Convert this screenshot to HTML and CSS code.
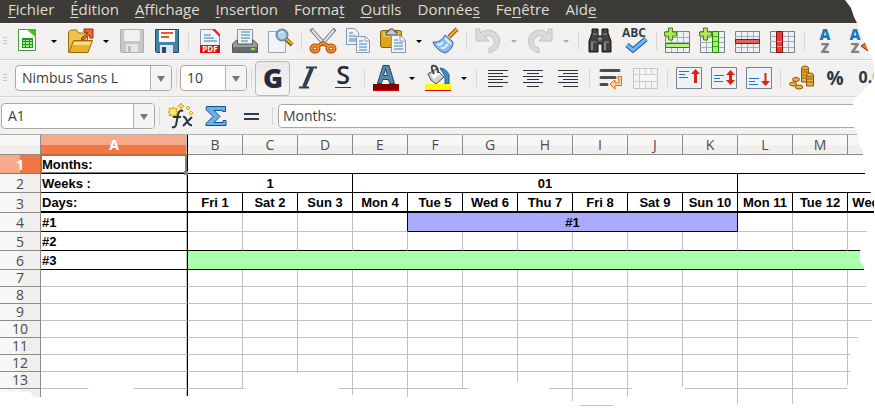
FILE: index.html
```
<!DOCTYPE html>
<html lang="fr">
<head>
<meta charset="utf-8">
<title>Planning</title>
<link rel="stylesheet" href="styles.css">
</head>
<body>
<div class="app">
<nav class="menu">
<a href="#"><u>F</u>ichier</a><a href="#"><u>É</u>dition</a><a href="#"><u>A</u>ffichage</a><a href="#"><u>I</u>nsertion</a><a href="#">Forma<u>t</u></a><a href="#"><u>O</u>utils</a><a href="#">Donnée<u>s</u></a><a href="#">Fe<u>n</u>être</a><a href="#">Aid<u>e</u></a>
</nav>

<div class="bar">
<span class="grip"></span>
<button class="btn" aria-label="Nouveau"><svg viewBox="0 0 26 26"><path d="M3.500 1.500h11l6 6v15h-17z" fill="#fdfefd" stroke="#3f9e3a"/><path d="M11 1h10v9z" fill="#3fc41f"/><path d="M12 2l8 7" stroke="#c9f2bb"/><path d="M7 10h11v10H7z" fill="#1f9a1b"/><path d="M8 12h2v1H8zM11 12h3v1h-3zM15 12h2v1h-2zM8 14h2v2H8zM11 14h3v2h-3zM15 14h2v2h-2zM8 17h2v2H8zM11 17h3v2h-3zM15 17h2v2h-2z" fill="#a8e59b"/></svg></button>
<button class="drop" aria-label="Options de nouveau"></button>
<button class="btn" aria-label="Ouvrir"><svg viewBox="0 0 26 26"><path d="M1.500 24V4l2-2h6l2 3h9v19z" fill="#f3c04a" stroke="#a16a09"/><path d="M2 24.500L6.500 12.500h19L21 24.500z" fill="#eab12c" stroke="#a16a09"/><path d="M7 14h17l-1 3H6z" fill="#ffdf86"/><path d="M14.500 12v-2L21 5l-4-1V1h9v9h-3l-1-3-6 5z" fill="#ec6a33" stroke="#8e2f0a"/></svg></button>
<button class="drop" aria-label="Options d'ouverture"></button>
<button class="btn" aria-label="Enregistrer" disabled><svg viewBox="0 0 26 26"><path d="M1.500 1.500h23v23h-22l-1-1z" fill="#c6c6c6" stroke="#b0b0b0"/><path d="M5 2h16v11H5z" fill="#f1f1f1"/><path d="M7 16h12v8H7z" fill="#e6e6e6"/><path d="M9 18h3v6H9z" fill="#bcbcbc"/></svg></button>
<button class="btn" aria-label="Enregistrer sous"><svg viewBox="0 0 26 26"><path d="M1.500 1.500h23v23h-22l-1-1z" fill="#4683a8" stroke="#1f4866"/><path d="M5 2h16v12H5z" fill="#fbfcfd"/><path d="M7 5h12M7 9h8" stroke="#f2562a" stroke-width="2"/><path d="M6 17h13v8H6z" fill="#dfe7ed"/><path d="M8 19h4v6H8z" fill="#244b66"/></svg></button>
<span class="sep"></span>
<button class="btn" aria-label="Exporter au format PDF"><svg viewBox="0 0 26 26"><path d="M3.500 1.500h12l7 7v16h-19z" fill="#eef3f8" stroke="#8795a5"/><path d="M15 1h3l5 5v3z" fill="#e2231f"/><path d="M7 7h7M7 10h10M7 13h13" stroke="#3979a9"/><path d="M3 17h20v8H3z" fill="#e00d0d"/><text x="13" y="24" font-size="8" class="svg-bold" fill="#fff">PDF</text></svg></button>
<button class="btn" aria-label="Imprimer"><svg viewBox="0 0 26 26"><path d="M5.500 15V1.500h15V15" fill="#eef4fa" stroke="#8494a5"/><path d="M9 4h9M9 7h9M9 10h9M9 13h7" stroke="#3680b5"/><path d="M.5 24.500V16l4-4h1v4h15v-4h1l4 4v8.500z" fill="#9b9c9c" stroke="#55585a"/><path d="M1 19h24v5H1z" fill="#686b6d"/><path d="M19 21h4" stroke="#7be33d" stroke-width="2"/></svg></button>
<button class="btn" aria-label="Aperçu"><svg viewBox="0 0 26 26"><path d="M1.500 3.500h17v21h-17z" fill="#f0f4f9" stroke="#9aa6b4"/><circle cx="15" cy="7" r="5.500" fill="#a8d5f4" stroke="#6b8bab" stroke-width="2"/><path d="M12 6q1-3 4-2" fill="none" stroke="#fff"/><path d="M19 11l6 6" stroke="#83530b" stroke-width="4"/><path d="M19 11l6 5" stroke="#f1b31f" stroke-width="2"/></svg></button>
<span class="sep"></span>
<button class="btn" aria-label="Couper"><svg viewBox="0 0 26 26"><path d="M1 1l14 16M25 1L11 17" stroke="#707880" stroke-width="4"/><path d="M2 2l12 14M24 2L12 16" stroke="#e3e6e8" stroke-width="2"/><g fill="none" stroke="#a84d05" stroke-width="4"><ellipse cx="5" cy="20.500" rx="3.500" ry="3"/><ellipse cx="21" cy="20.500" rx="3.500" ry="3"/><path d="M8 18l5-3 5 3"/></g><g fill="none" stroke="#f58f2b" stroke-width="2"><ellipse cx="5" cy="20.500" rx="3.500" ry="3"/><ellipse cx="21" cy="20.500" rx="3.500" ry="3"/><path d="M8 18l5-3 5 3"/></g></svg></button>
<button class="btn" aria-label="Copier"><svg viewBox="0 0 26 26"><path d="M1.500.5h8l4 4v12h-12z" fill="#edf3f9" stroke="#8998aa"/><path d="M4 5h4M4 8h7M4 11h7M4 13h7" stroke="#3d82b8"/><path d="M11.500 8.500h9l4 4v12h-13z" fill="#edf3f9" stroke="#8998aa"/><path d="M20 9v4h4" fill="#fff" stroke="#8998aa"/><path d="M14 13h4M14 16h8M14 19h8M14 22h8" stroke="#3d82b8"/></svg></button>
<button class="btn" aria-label="Coller"><svg viewBox="0 0 26 26"><rect x=".5" y="2.500" width="21" height="17" rx="2" fill="#dba51c" stroke="#85600c"/><path d="M3 4h16v5H3z" fill="#efc44c"/><path d="M6 5.500V4h2l2-3h3l2 3h2v3H6z" fill="#c5c8ca" stroke="#47494b"/><path d="M11.500 7.500h9l5 5v12h-14z" fill="#edf3f9" stroke="#8998aa"/><path d="M20 8v5h5" fill="#fff" stroke="#8998aa"/><path d="M14 12h4M14 15h9M14 18h9M14 21h9" stroke="#3d82b8"/></svg></button>
<button class="drop" aria-label="Options de collage"></button>
<button class="btn" aria-label="Cloner le formatage"><svg viewBox="0 0 26 26"><path d="M17 9l8-8" stroke="#88550a" stroke-width="4"/><path d="M17 9l8-8" stroke="#f3b530" stroke-width="2"/><path d="M13 7l8 7c0 5-3 9-8 11C9 24 3 20 1 14c5 1 9-2 12-7z" fill="#86bdf0" stroke="#2c5fa8"/><path d="M5 16l3 1 3-3M9 20l3 0 4-4M13 10l6 6" fill="none" stroke="#e0f1ff" stroke-width="2"/></svg></button>
<span class="sep"></span>
<button class="btn" aria-label="Annuler" disabled><svg viewBox="0 0 26 26"><path d="M1 1h4v4Q14-1 21 5c7 7 3 18-7 20v-5c7-2 6-8 3-11q-3-3-7 0l4 4H1z" fill="#dadada" stroke="#c2c2c2"/></svg></button>
<button class="drop dim" aria-label="Historique d'annulation" disabled></button>
<button class="btn" aria-label="Rétablir" disabled><svg viewBox="0 0 26 26"><path d="M25 1h-4v4Q12-1 5 5c-7 7-3 18 7 20v-5c-7-2-6-8-3-11q3-3 7 0l-4 4h13z" fill="#dadada" stroke="#c2c2c2"/></svg></button>
<button class="drop dim" aria-label="Historique de rétablissement" disabled></button>
<span class="sep"></span>
<button class="btn" aria-label="Rechercher"><svg viewBox="0 0 26 26"><path d="M5 1h6v7h4V1h6v4l3 8v11h-9v-8h-4v8H2V13l3-8z" fill="#414141" stroke="#161616"/><path d="M6 6h4M16 6h4M4 14h5M17 14h5" stroke="#9b9b9b"/><path d="M5 15v7M18 15v7" stroke="#858585" stroke-width="2"/><circle cx="13" cy="11" r="2" fill="#8a8a8a"/></svg></button>
<button class="btn" aria-label="Orthographe"><svg viewBox="0 0 26 26"><text x="12" y="9" font-size="12" class="svg-bold" fill="#303f4c">ABC</text><path d="M5 17l6 5L24 11" fill="none" stroke="#1c4f9c" stroke-width="5"/><path d="M5 17l6 5L24 11" fill="none" stroke="#67b9f7" stroke-width="3"/></svg></button>
<span class="sep"></span>
<button class="btn" aria-label="Insérer une ligne"><svg viewBox="0 0 26 26"><path d="M.5 3.500h24v21H.5z" fill="#eef0f3" stroke="#777f87"/><path d="M6.500 4v20M12.500 4v20M18.500 4v20M0 9.500h24M0 14.500h24M0 19.500h24" stroke="#a7adb4"/><path d="M.5 15.500h24v4H.5z" fill="#b4f27a" stroke="#1d8c0d"/><path d="M3.500 0h4v4h4v4h-4v4h-4V8h-4V4h4z" fill="#b6e35b" stroke="#3c8710"/></svg></button>
<button class="btn" aria-label="Insérer une colonne"><svg viewBox="0 0 26 26"><path d="M.5 3.500h24v21H.5z" fill="#eef0f3" stroke="#777f87"/><path d="M6.500 4v20M12.500 4v20M18.500 4v20M0 9.500h24M0 14.500h24M0 19.500h24" stroke="#a7adb4"/><path d="M12.500 3.500h6v21h-6z" fill="#a9f06c" stroke="#1d8c0d"/><path d="M13 8.500h5M13 13.500h5M13 18.500h5" stroke="#3caa20"/><path d="M3.500 0h4v4h4v4h-4v4h-4V8h-4V4h4z" fill="#b6e35b" stroke="#3c8710"/></svg></button>
<button class="btn" aria-label="Supprimer la ligne"><svg viewBox="0 0 26 26"><path d="M.5 3.500h24v21H.5z" fill="#eef0f3" stroke="#777f87"/><path d="M6.500 4v20M12.500 4v20M18.500 4v20M0 8.500h24M0 13.500h24M0 19.500h24" stroke="#a7adb4"/><path d="M.5 11.500h24v4H.5z" fill="#e85b5b" stroke="#a30c0c"/></svg></button>
<button class="btn" aria-label="Supprimer la colonne"><svg viewBox="0 0 26 26"><path d="M.5 3.500h24v21H.5z" fill="#eef0f3" stroke="#777f87"/><path d="M6.500 4v20M12.500 4v20M18.500 4v20M0 8.500h24M0 13.500h24M0 19.500h24" stroke="#a7adb4"/><path d="M6.500 3.500h6v21h-6z" fill="#e83a3a" stroke="#8f0c0c"/><path d="M7 13.500h5M7 18.500h5" stroke="#f9a0a0"/></svg></button>
<span class="sep"></span>
<button class="btn" aria-label="Tri croissant"><svg viewBox="0 0 26 26"><text x="12" y="12" font-size="15" class="svg-heavy" fill="#1b78c4">A</text><text x="12" y="25" font-size="14" class="svg-heavy" fill="#7b8085">Z</text></svg></button>
<button class="btn" aria-label="Tri décroissant"><svg viewBox="0 0 26 26"><text x="7" y="12" font-size="15" class="svg-heavy" fill="#1b78c4">A</text><text x="7" y="25" font-size="14" class="svg-heavy" fill="#7b8085">Z</text><path d="M13 18l6-4v3h6v3h-5v3z" fill="#ef6a25" stroke="#8e230a"/></svg></button>
</div>

<div class="bar">
<span class="grip wide"></span>
<label class="combo font"><select aria-label="Police"><option>Nimbus Sans L</option></select></label>
<span class="sep"></span>
<label class="combo size"><select aria-label="Taille"><option>10</option></select></label>
<span class="sep"></span>
<button class="btn on" aria-label="Gras"><svg viewBox="0 0 26 26"><text x="13" y="23" font-size="27" class="svg-heavy" fill="#232c38">G</text></svg></button>
<button class="btn" aria-label="Italique"><svg viewBox="0 0 26 26"><path d="M11 2.500h11M4 22.500h10" stroke="#2d3f50" stroke-width="2"/><path d="M17 3L9 22" stroke="#2d3f50" stroke-width="4"/></svg></button>
<button class="btn" aria-label="Souligné"><svg viewBox="0 0 26 26"><text x="13" y="19" font-size="25" class="svg-text" fill="#232c38">S</text><path d="M5 22.500h16" stroke="#2d3f50"/></svg></button>
<span class="sep"></span>
<button class="btn" aria-label="Couleur de police"><svg viewBox="0 0 26 26"><path d="M4.500 18.500L10 .5h6l5.500 18h-5l-1-4h-6l-1 4zM10.500 10.500h4L12.500 4z" fill="#5588ac" fill-rule="evenodd" stroke="#24475f"/><path d="M0 19h26v6H0z" fill="#800000"/><path d="M0 25h26v1H0z" fill="#e00000"/></svg></button>
<button class="drop" aria-label="Choisir la couleur de police"></button>
<button class="btn" aria-label="Surlignage"><svg viewBox="0 0 26 26"><path d="M15 3q7 1 9 7v9h-4v-8z" fill="#3c8bc4" stroke="#195d90"/><path d="M3 9l8-5 8 8-8 7q-6-3-8-10z" fill="#d0d3d5" stroke="#42484c"/><path d="M6 10l6-4 3 3-6 5z" fill="#fff"/><path d="M9 9Q4-1 10 1q3 1 3 7" fill="none" stroke="#42484c" stroke-width="2"/><path d="M0 19h26v6H0z" fill="#ff0"/><path d="M0 25h26v1H0z" fill="#e00000"/></svg></button>
<button class="drop" aria-label="Choisir la couleur de surlignage"></button>
<span class="sep"></span>
<button class="btn" aria-label="Aligner à gauche"><svg viewBox="0 0 26 26"><path d="M3 5.500h20M3 8.500h15M3 11.500h20M3 14.500h15M3 17.500h20M3 21.500h15" stroke="#27333f"/></svg></button>
<button class="btn" aria-label="Centrer"><svg viewBox="0 0 26 26"><path d="M3 5.500h20M7 8.500h12M3 11.500h20M7 14.500h12M3 17.500h20M7 21.500h12" stroke="#27333f"/></svg></button>
<button class="btn" aria-label="Aligner à droite"><svg viewBox="0 0 26 26"><path d="M3 5.500h20M8 8.500h15M3 11.500h20M8 14.500h15M3 17.500h20M8 21.500h15" stroke="#27333f"/></svg></button>
<span class="sep"></span>
<button class="btn" aria-label="Renvoi à la ligne"><svg viewBox="0 0 26 26"><path d="M3 5.500h18M3 12.500h14M3 19.500h6" stroke="#464c50" stroke-width="3" stroke-linecap="round"/><path d="M20 11.500h3.500v9H17v3.500L12 19l5-4v3h4v-4h-1z" fill="#fcd9a8" stroke="#d96c0c"/></svg></button>
<button class="btn" aria-label="Fusionner les cellules" disabled><svg viewBox="0 0 26 26"><path d="M.5 3.500h24v20H.5z" fill="#f4f4f4" stroke="#c4c4c4"/><path d="M6.500 4v6M12.500 4v6M18.500 4v6M6.500 10v7M6.500 17v6M12.500 17v6M18.500 17v6M0 9.500h24M0 16.500h24" stroke="#cdcdcd"/></svg></button>
<span class="sep"></span>
<button class="btn" aria-label="Aligner en haut"><svg viewBox="0 0 26 26"><path d="M.5 2.500h25v21H.5z" fill="#edf2f7" stroke="#76818d"/><path d="M3 6.500h10M3 9.500h6M3 12.500h9" stroke="#2378bd"/><path d="M19.500 18V8" stroke="#d8240e" stroke-width="3"/><path d="M15 9l4.500-5L24 9z" fill="#d8240e"/></svg></button>
<button class="btn" aria-label="Centrer verticalement"><svg viewBox="0 0 26 26"><path d="M.5 2.500h25v21H.5z" fill="#edf2f7" stroke="#76818d"/><path d="M3 10.500h10M3 13.500h6M3 16.500h9" stroke="#2378bd"/><path d="M19.500 17V8" stroke="#d8240e" stroke-width="3"/><path d="M15 10l4.500-5 4.500 5zM15 15l4.500 5 4.500-5z" fill="#d8240e"/></svg></button>
<button class="btn" aria-label="Aligner en bas"><svg viewBox="0 0 26 26"><path d="M.5 2.500h25v21H.5z" fill="#edf2f7" stroke="#76818d"/><path d="M3 13.500h10M3 16.500h6M3 19.500h9" stroke="#2378bd"/><path d="M19.500 18V8" stroke="#d8240e" stroke-width="2"/><path d="M15 16l4.500 5 4.500-5z" fill="#d8240e"/></svg></button>
<span class="sep"></span>
<button class="btn" aria-label="Format monétaire"><svg viewBox="0 0 26 26"><g fill="#edb239" stroke="#8d560a"><path d="M12.500 3v14h7V3z"/><path d="M17.500 10v11h7V10z"/><ellipse cx="16" cy="3" rx="3.500" ry="2"/><ellipse cx="21" cy="10" rx="3.500" ry="2"/><ellipse cx="7" cy="14.500" rx="3.500" ry="2"/><ellipse cx="4" cy="19" rx="3.500" ry="2"/><ellipse cx="10" cy="22" rx="4" ry="2"/></g><path d="M13 7h6M13 10h4M13 13h4M18 14h6M18 17h6" stroke="#8d560a"/></svg></button>
<button class="btn" aria-label="Format pourcentage"><svg viewBox="0 0 26 26"><text x="11" y="20" font-size="19" class="svg-bold" fill="#263847">%</text></svg></button>
<button class="btn" aria-label="Format standard"><svg viewBox="0 0 26 26"><text x="11" y="18" font-size="16" class="svg-bold" fill="#263847">0.0</text></svg></button>
</div>

<div class="bar formula">
<label class="combo name"><select aria-label="Zone de nom"><option>A1</option></select></label>
<span class="sep"></span>
<button class="btn" aria-label="Assistant fonctions"><svg viewBox="0 0 26 26"><path d="M5 4l1 2 3-1-1 3 2 1-2 1 1 3-3-1-1 2-1-2-3 1 1-3-2-1 2-1-1-3 3 1zM13 0l1 2 2 1-2 1-1 2-1-2-2-1 2-1zM20 3l2 2-2 2-2-2zM23 8l2 2-2 2-2-2z" fill="#ffe87a" stroke="#e6a400"/><path d="M15 8q-4-2-5 4L8 22q-1 3-4 2M5 14h8" fill="none" stroke="#243746" stroke-width="2"/><path d="M15 14q2-1 4 4t5 4M24 14l-9 9" fill="none" stroke="#243746" stroke-width="2"/></svg></button>
<button class="btn" aria-label="Somme"><svg viewBox="0 0 26 26"><path d="M3.500 3.500h19v5h-3v-1H11l6 6-6 6h9v-2h3v5h-20v-2l7-7-7-7z" fill="#63b2ec" stroke="#17508c"/></svg></button>
<button class="btn" aria-label="Formule"><svg viewBox="0 0 26 26"><path d="M6 11h15M6 16h15" stroke="#2a3e50" stroke-width="2"/></svg></button>
<span class="sep"></span>
<input class="entry" type="text" aria-label="Ligne de saisie" value="Months:">
</div>

<div class="sheet">
<table>
<colgroup><col class="c-num"><col class="c-a"><col span="13" class="c-day"></colgroup>
<thead><tr><th></th><th class="sel">A</th><th>B</th><th>C</th><th>D</th><th>E</th><th>F</th><th>G</th><th>H</th><th>I</th><th>J</th><th>K</th><th>L</th><th>M</th><th></th></tr></thead>
<tbody>
<tr class="tall line"><th class="sel">1</th><td class="cursor">Months:</td><td colspan="13"></td></tr>
<tr class="tall line mid"><th>2</th><td>Weeks :</td><td colspan="3">1</td><td colspan="7">01</td><td colspan="3"></td></tr>
<tr class="tall line mid thick"><th>3</th><td>Days:</td><td>Fri 1</td><td>Sat 2</td><td>Sun 3</td><td>Mon 4</td><td>Tue 5</td><td>Wed 6</td><td>Thu 7</td><td>Fri 8</td><td>Sat 9</td><td>Sun 10</td><td>Mon 11</td><td>Tue 12</td><td>Wed 13</td></tr>
<tr class="tall"><th>4</th><td class="task">#1</td><td></td><td></td><td></td><td class="before"></td><td colspan="6" class="span-blue">#1</td><td></td><td></td><td></td></tr>
<tr class="tall base"><th>5</th><td class="task">#2</td><td></td><td></td><td></td><td></td><td></td><td></td><td></td><td></td><td></td><td></td><td></td><td></td><td></td></tr>
<tr class="tall line"><th>6</th><td>#3</td><td colspan="13" class="span-green"></td></tr>
<tr><th>7</th><td></td><td></td><td></td><td></td><td></td><td></td><td></td><td></td><td></td><td></td><td></td><td></td><td></td><td></td></tr>
<tr><th>8</th><td></td><td></td><td></td><td></td><td></td><td></td><td></td><td></td><td></td><td></td><td></td><td></td><td></td><td></td></tr>
<tr><th>9</th><td></td><td></td><td></td><td></td><td></td><td></td><td></td><td></td><td></td><td></td><td></td><td></td><td></td><td></td></tr>
<tr><th>10</th><td></td><td></td><td></td><td></td><td></td><td></td><td></td><td></td><td></td><td></td><td></td><td></td><td></td><td></td></tr>
<tr><th>11</th><td></td><td></td><td></td><td></td><td></td><td></td><td></td><td></td><td></td><td></td><td></td><td></td><td></td><td></td></tr>
<tr><th>12</th><td></td><td></td><td></td><td></td><td></td><td></td><td></td><td></td><td></td><td></td><td></td><td></td><td></td><td></td></tr>
<tr><th>13</th><td></td><td></td><td></td><td></td><td></td><td></td><td></td><td></td><td></td><td></td><td></td><td></td><td></td><td></td></tr>
<tr><th></th><td></td><td></td><td></td><td></td><td></td><td></td><td></td><td></td><td></td><td></td><td></td><td></td><td></td><td></td></tr>
</tbody>
</table>
</div>

<svg class="tear side" viewBox="0 0 75 415" aria-hidden="true"><path d="M45 0L51 8 54 17 57 23 60 30 65 43 69 53 73 60 74 66 73 80 68 86 62 92 55 98 53 104 53 126 56 130 57 134 60 146 63 150 63 155 65 173 68 186 74 200 74 212 67 231 61 243 60 252 60 262 64 266 64 269 66 286 72 303 72 320 58 337 50 354 50 371 47 388 47 415 75 415 75 0z"/></svg>
<svg class="tear foot" viewBox="0 0 875 45" aria-hidden="true"><path d="M0 22h30l4 5h8l18-6 28-2 2-2h43l3 4 51 5h3l45-6 14-2 1-2 30-13h17l23 1 18 14 2 2 12 5 55 2 33-4 22-4h6l1-3 48-4 28 2 6 6 21 11 7 1 1 4h33l1-5 14-5 5-9h50l4 3 51 14h55l54-14 4-2h25v28H0z"/></svg>
</div>
</body>
</html>
```
FILE: styles.css
```
* { box-sizing: border-box; }

body {
  margin: 0;
  background: #fff;
  font-family: "Open Sans", "Noto Sans", sans-serif;
  color: #3c3c3c;
}

.app {
  position: relative;
  overflow: hidden;
}

.menu {
  display: flex;
  gap: 16px;
  height: 23px;
  padding: 0 8px;
  background: #3c3b37;
  font-size: 15px;
  line-height: 19px;
}

.menu a {
  color: #dfdbd2;
  text-decoration: none;
}

.menu u {
  text-decoration: underline 1px;
  text-decoration-skip-ink: none;
  text-underline-offset: 2px;
}

.bar {
  display: flex;
  align-items: center;
  height: 37px;
  overflow: hidden;
  background: #f2f1f0;
  border-bottom: 1px solid #d6d4d1;
  box-shadow: inset 0 1px #f9f9f8;
}

.bar > * { flex: none; }

.formula {
  height: 38px;
  padding-left: 1px;
  border-bottom-color: #b0aeab;
}

.grip {
  width: 10px;
  height: 8px;
  background: repeating-linear-gradient(#c9c7c4 0 1px, #f2f1f0 1px 3px) 3px 0 / 4px 8px no-repeat;
}

.grip.wide { width: 15px; }

.sep {
  width: 8px;
  height: 18px;
  background: linear-gradient(#d9d7d4, #d9d7d4) 4px 0 / 1px 18px no-repeat;
}

.btn {
  display: flex;
  align-items: center;
  justify-content: center;
  width: 35px;
  height: 35px;
  padding: 0;
  border: 1px solid transparent;
  border-radius: 4px;
  background: none;
}

.btn.on {
  border-color: #bcb9b5;
  background: linear-gradient(#e9e8e6, #f6f6f5);
}

.btn svg {
  width: 26px;
  height: 26px;
  overflow: visible;
}

.svg-bold,
.svg-heavy,
.svg-text {
  font-family: "Open Sans", sans-serif;
  font-weight: 700;
  text-anchor: middle;
}

.svg-heavy { font-weight: 800; }
.svg-text { font-weight: 600; }

.drop {
  display: flex;
  align-items: center;
  justify-content: center;
  width: 17px;
  height: 35px;
  padding: 0;
  border: 0;
  background: none;
}

.drop::after {
  content: "";
  border: 3px solid transparent;
  border-top-color: #000;
  border-bottom: 0;
}

.drop.dim::after { border-top-color: #aaa; }

.combo {
  position: relative;
  height: 26px;
  border: 1px solid #aba8a4;
  border-radius: 4px;
  background: #fff;
  overflow: hidden;
}

.combo::after {
  content: "";
  position: absolute;
  right: 6px;
  top: 10px;
  border: 4px solid transparent;
  border-top: 6px solid #777;
  border-bottom: 0;
  pointer-events: none;
}

.combo select {
  appearance: none;
  width: 100%;
  height: 100%;
  padding: 0 24px 0 6px;
  border: 0;
  background: linear-gradient(90deg, #b5b2ae 1px, #f5f4f3 1px) right / 21px 100% no-repeat;
  font: 14px/22px "Open Sans", sans-serif;
  color: #3c3c3c;
}

.combo.font { width: 157px; }
.combo.size { width: 67px; }
.combo.name { width: 154px; }

.formula .entry {
  flex: 1;
  height: 24px;
  margin-left: 2px;
  padding: 0 4px;
  border: 1px solid #aba8a4;
  border-radius: 4px;
  background: #fff;
  font: 14px/20px "Open Sans", sans-serif;
  color: #3c3c3c;
}

.sheet { overflow: hidden; }

table {
  table-layout: fixed;
  width: 903px;
  border-spacing: 0;
}

.c-num { width: 41px; }
.c-a { width: 147px; }
.c-day { width: 55px; }

th,
td {
  height: 17px;
  padding: 0;
  border: 0 solid #c0c0c0;
  border-width: 0 1px 1px 0;
  overflow: hidden;
  white-space: nowrap;
  text-align: center;
}

th {
  border-color: #8f8c88;
  font-weight: 400;
  font-size: 14px;
  line-height: 16px;
  color: #4c4c4c;
}

thead th {
  height: 20px;
  background: linear-gradient(#f7f7f6 50%, #f0efee 50%);
}

tbody th { background: linear-gradient(90deg, #f7f7f6 50%, #f0efee 50%); }

th.sel {
  border-color: #d5602f;
  color: #fff;
  font-weight: 700;
  background: linear-gradient(#f6a98b 50%, #f07746 50%);
}

tbody th.sel { background: linear-gradient(90deg, #f6a98b 50%, #f07746 50%); }

thead th.sel,
td:nth-child(2) {
  border-right-color: #000;
  box-shadow: inset -1px 0 #c0c0c0;
}

td {
  font: 700 13px/16px "Liberation Sans", sans-serif;
  color: #000;
}

td:nth-child(2) {
  padding-left: 1px;
  text-align: left;
}

.tall > * {
  height: 19px;
  padding-top: 2px;
}

.thick > * { height: 20px; }

.line td,
.base td,
td.task { border-bottom-color: #000; }

.mid td { border-right-color: #000; }
.thick td { border-bottom-width: 2px; }

td.before { border-right-color: #000; }

td.span-blue {
  background: #aaaaff;
  border-color: #000;
}

td.span-green { background: #aaffaa; }

td.cursor {
  position: relative;
  overflow: visible;
  box-shadow: inset 0 0 0 1px #808080, inset -2px -1px #808080;
}

td.cursor::after {
  content: "";
  position: absolute;
  right: -1px;
  bottom: -2px;
  width: 4px;
  height: 4px;
  background: #808080;
}

.tear {
  position: absolute;
  fill: #fff;
  pointer-events: none;
}

.tear.side {
  top: 0;
  right: 0;
  width: 75px;
  height: 415px;
}

.tear.foot {
  top: 370px;
  left: 0;
  width: 875px;
  height: 45px;
}
```
